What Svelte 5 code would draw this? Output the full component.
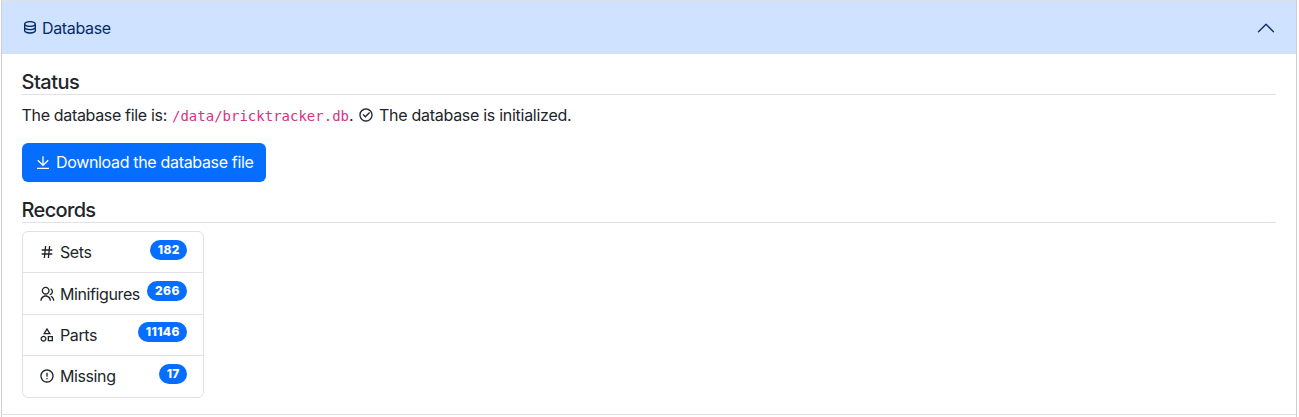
<script>
  const icons = {
    database: 'M5 12.5C5 12.8134 5.46101 13.3584 6.53047 13.8931C7.91405 14.5849 9.87677 15 12 15C14.1232 15 16.0859 14.5849 17.4695 13.8931C18.539 13.3584 19 12.8134 19 12.5V10.3287C17.35 11.3482 14.8273 12 12 12C9.17273 12 6.64996 11.3482 5 10.3287V12.5ZM19 15.3287C17.35 16.3482 14.8273 17 12 17C9.17273 17 6.64996 16.3482 5 15.3287V17.5C5 17.8134 5.46101 18.3584 6.53047 18.8931C7.91405 19.5849 9.87677 20 12 20C14.1232 20 16.0859 19.5849 17.4695 18.8931C18.539 18.3584 19 17.8134 19 17.5V15.3287ZM3 17.5V7.5C3 5.01472 7.02944 3 12 3C16.9706 3 21 5.01472 21 7.5V17.5C21 19.9853 16.9706 22 12 22C7.02944 22 3 19.9853 3 17.5ZM12 10C14.1232 10 16.0859 9.58492 17.4695 8.89313C18.539 8.3584 19 7.81342 19 7.5C19 7.18658 18.539 6.6416 17.4695 6.10687C16.0859 5.41508 14.1232 5 12 5C9.87677 5 7.91405 5.41508 6.53047 6.10687C5.46101 6.6416 5 7.18658 5 7.5C5 7.81342 5.46101 8.3584 6.53047 8.89313C7.91405 9.58492 9.87677 10 12 10Z',
    check: 'M12 22C6.47715 22 2 17.5228 2 12C2 6.47715 6.47715 2 12 2C17.5228 2 22 6.47715 22 12C22 17.5228 17.5228 22 12 22ZM12 20C16.4183 20 20 16.4183 20 12C20 7.58172 16.4183 4 12 4C7.58172 4 4 7.58172 4 12C4 16.4183 7.58172 20 12 20ZM11.0026 16L6.75999 11.7574L8.17421 10.3431L11.0026 13.1716L16.6595 7.51472L18.0737 8.92893L11.0026 16Z',
    download: 'M3 19H21V21H3V19ZM13 13.1716L19.0711 7.1005L20.4853 8.51472L12 17L3.51472 8.51472L4.92893 7.1005L11 13.1716V2H13V13.1716Z',
    hash: 'M7.78428 14L8.2047 10H4V8H8.41491L8.94043 3H10.9514L10.4259 8H14.4149L14.9404 3H16.9514L16.4259 8H20V10H16.2157L15.7953 14H20V16H15.5851L15.0596 21H13.0486L13.5741 16H9.58509L9.05957 21H7.04855L7.57407 16H4V14H7.78428ZM9.7953 14H13.7843L14.2047 10H10.2157L9.7953 14Z',
    group: 'M2 22C2 17.5817 5.58172 14 10 14C14.4183 14 18 17.5817 18 22H16C16 18.6863 13.3137 16 10 16C6.68629 16 4 18.6863 4 22H2ZM10 13C6.685 13 4 10.315 4 7C4 3.685 6.685 1 10 1C13.315 1 16 3.685 16 7C16 10.315 13.315 13 10 13ZM10 11C12.21 11 14 9.21 14 7C14 4.79 12.21 3 10 3C7.79 3 6 4.79 6 7C6 9.21 7.79 11 10 11ZM18.2837 14.7028C21.0644 15.9561 23 18.752 23 22H21C21 19.564 19.5483 17.4671 17.4628 16.5271L18.2837 14.7028ZM17.5962 3.41321C19.5944 4.23703 21 6.20361 21 8.5C21 11.3702 18.8042 13.7252 16 13.9776V11.9646C17.6967 11.7222 19 10.264 19 8.5C19 7.11935 18.2016 5.92603 17.041 5.35635L17.5962 3.41321Z',
    shapes: 'M12 1L18 11H6L12 1ZM12 4.887L9.533 9H14.467L12 4.887ZM6.75 20C8.13071 20 9.25 18.8807 9.25 17.5C9.25 16.1193 8.13071 15 6.75 15C5.36929 15 4.25 16.1193 4.25 17.5C4.25 18.8807 5.36929 20 6.75 20ZM6.75 22C4.26472 22 2.25 19.9853 2.25 17.5C2.25 15.0147 4.26472 13 6.75 13C9.23528 13 11.25 15.0147 11.25 17.5C11.25 19.9853 9.23528 22 6.75 22ZM15 15.5V19.5H19V15.5H15ZM13 21.5V13.5H21V21.5H13Z',
    warning: 'M12 22C6.47715 22 2 17.5228 2 12C2 6.47715 6.47715 2 12 2C17.5228 2 22 6.47715 22 12C22 17.5228 17.5228 22 12 22ZM12 20C16.4183 20 20 16.4183 20 12C20 7.58172 16.4183 4 12 4C7.58172 4 4 7.58172 4 12C4 16.4183 7.58172 20 12 20ZM11 15H13V17H11V15ZM11 7H13V13H11V7Z'
  };
  const records = [
    { icon: 'hash', name: 'Sets', count: 182 },
    { icon: 'group', name: 'Minifigures', count: 266 },
    { icon: 'shapes', name: 'Parts', count: 11146 },
    { icon: 'warning', name: 'Missing', count: 17 }
  ];
</script>

{#snippet icon(name)}
  <svg class="icon" viewBox="0 0 24 24" aria-hidden="true"><path fill-rule="evenodd" d={icons[name]} /></svg>
{/snippet}

<section class="item">
  <button class="header">
    {@render icon('database')}
    <span class="title">Database</span>
    <svg class="chevron" viewBox="0 0 16 16" aria-hidden="true"><path d="m2 11 6-6 6 6" /></svg>
  </button>
  <div class="body">
    <h5 class="status">Status</h5>
    <p><span class="intro">The database file is:</span><code>/data/bricktracker.db</code><span class="dot">.</span>{@render icon('check')}<span class="init">The database is initialized.</span></p>
    <button class="download">{@render icon('download')}<span>Download the database file</span></button>
    <h5 class="records">Records</h5>
    <ul>
      {#each records as r}
        <li>{@render icon(r.icon)}<span class="name">{r.name}</span><span class="badge">{r.count}</span></li>
      {/each}
    </ul>
  </div>
</section>
<section class="next"></section>

<style>
  :global(body) { background: #fff; }
  .item, .next {
    box-sizing: border-box;
    width: 1296px;
    margin-left: 1px;
    border: 1px solid #dee2e6;
    border-left-color: #ccced1;
    border-right-color: #ccced1;
  }
  .item {
    height: 415px;
    color: #212529;
    font: 16px/24px Inter, sans-serif;
  }
  .next { height: 2px; border-top: 0; border-bottom: 0; }
  button { border: 0; font: inherit; text-align: left; }
  .header {
    display: flex;
    align-items: center;
    width: 100%;
    height: 53px;
    padding: 0 20px;
    background: #cfe2ff;
    box-shadow: inset 0 -1px #d3dff0;
    color: #052c65;
  }
  .icon { flex: none; width: 16px; height: 16px; fill: currentColor; }
  .header .icon { margin-top: -1px; }
  .title { margin-left: 4px; letter-spacing: -0.35px; }
  .chevron { width: 20px; height: 20px; margin-left: auto; fill: none; stroke: #052c65; stroke-linecap: round; stroke-linejoin: round; }
  .body { padding: 16px 20px; }
  h5 {
    box-sizing: border-box;
    height: 25px;
    margin: 0;
    border-bottom: 1px solid #dee2e6;
    font-size: 20px;
    font-weight: 500;
    line-height: 24px;
    letter-spacing: -0.5px;
    text-indent: -0.5px;
  }
  .records { margin-top: 16px; letter-spacing: -0.65px; }
  p { display: flex; align-items: center; height: 24px; margin: 8px 0 16px; white-space: nowrap; }
  .intro { width: 150px; letter-spacing: -0.33px; text-indent: -0.5px; }
  code { width: 177px; padding-top: 1px; color: #d63384; font: 14px/24px "DejaVu Sans Mono", monospace; }
  .dot { width: 9px; }
  .init { margin-left: 5px; letter-spacing: -0.28px; }
  .download {
    display: flex;
    align-items: center;
    width: 244px;
    height: 39px;
    padding: 0 13px 1px;
    border-radius: 6px;
    background: #056eff;
    color: #fff;
    white-space: nowrap;
  }
  .download .icon, .download :global(svg) { margin-top: 1px; }
  .download span { margin-left: 5px; letter-spacing: -0.33px; }
  ul {
    box-sizing: border-box;
    width: 182px;
    height: 167px;
    margin: 8px 0 0;
    padding: 0;
    border: 1px solid #dee2e6;
    border-radius: 6px;
    list-style: none;
  }
  li { display: flex; align-items: center; box-sizing: border-box; height: 41.4px; padding: 0 16px; }
  li:first-child { height: 40.4px; }
  li + li { border-top: 1px solid #dee2e6; }
  .name { margin-left: 5px; letter-spacing: -0.4px; }
  .badge {
    box-sizing: border-box;
    height: 20px;
    margin: -5px 0 0 auto;
    padding: 0 7.3px 0 7.8px;
    border-radius: 10px;
    background: #056eff;
    color: #fff;
    font-size: 12px;
    font-weight: 800;
    line-height: 20px;
    letter-spacing: 0.35px;
  }
</style>
